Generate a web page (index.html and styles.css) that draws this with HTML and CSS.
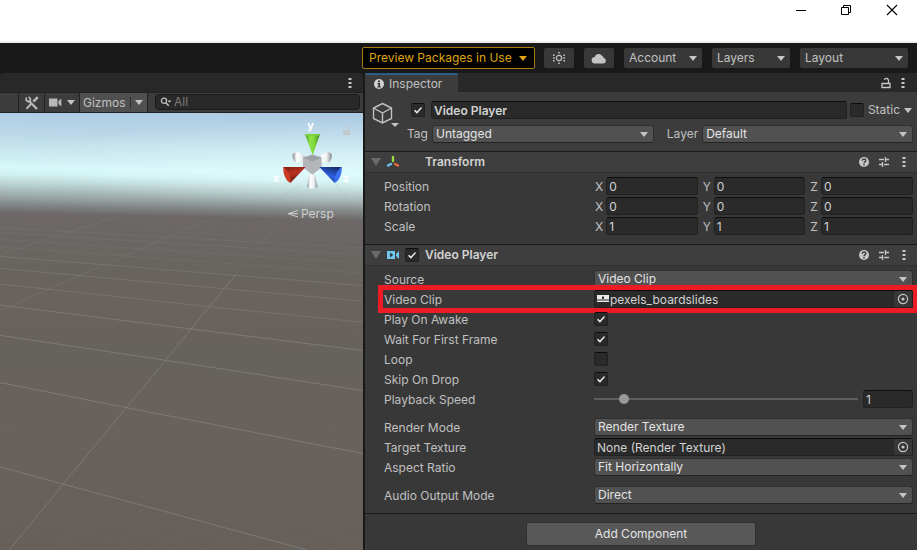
FILE: index.html
```html
<!DOCTYPE html>
<html lang="en">
<head>
<meta charset="utf-8">
<title>Unity Editor</title>
<link rel="stylesheet" href="styles.css">
</head>
<body>
<svg class="defs" aria-hidden="true">
  <symbol id="dots" viewBox="0 0 4 12"><path d="M.5 1h3v2h-3zM.5 5h3v2h-3zM.5 9h3v2h-3z" fill="#c8c8c8"/></symbol>
  <symbol id="help" viewBox="0 0 12 12"><circle cx="6" cy="6" r="5" fill="#c8c8c8"/><path d="M4.2 4.7c0-2.3 3.6-2.3 3.6-.1C7.8 5.9 6 5.7 6 7.2M6 8v1.4" fill="none" stroke="#3c3c3c" stroke-width="1.4"/></symbol>
  <symbol id="preset" viewBox="0 0 12 12"><path d="M1 3.5h5M8 3.5h3M7.5 1v5M1 8.5h3M6 8.5h5M4.5 6v5" fill="none" stroke="#c8c8c8" stroke-width="1.3"/></symbol>
  <symbol id="target" viewBox="0 0 12 12"><circle cx="6" cy="6" r="4.6" fill="none" stroke="#c4c4c4" stroke-width="1.2"/><circle cx="6" cy="6" r="1.6" fill="#c4c4c4"/></symbol>
</svg>

<header class="titlebar">
  <button aria-label="Minimize"><svg width="12" height="12"><path d="M2 6.5h10" stroke="#000"/></svg></button>
  <button aria-label="Restore"><svg width="12" height="12"><path d="M1.5 3.5h7v7h-7zM3.500 3.500v-2h7v7h-2" fill="none" stroke="#000"/></svg></button>
  <button aria-label="Close"><svg width="12" height="12"><path d="M1 1l10 10M11 1L1 11" stroke="#000" stroke-width="1.1"/></svg></button>
</header>

<nav class="toolbar">
  <button class="preview">Preview Packages in Use<i class="arrow"></i></button>
  <button class="tool" aria-label="Services"><svg width="14" height="14"><circle cx="7" cy="7" r="2.6" fill="none" stroke="#c4c4c4" stroke-width="1.2"/><path d="M6.200 1h1.600v1.600H6.200zM6.200 11.400h1.600V13H6.200zM1 3.500h1.600v1.600H1zM1 6.200h1.600v1.600H1zM1 9h1.600v1.600H1zM11.400 3.500H13v1.600h-1.600zM11.400 6.200H13v1.600h-1.600zM11.400 9H13v1.600h-1.600z" fill="#c4c4c4"/></svg></button>
  <button class="tool" aria-label="Cloud"><svg width="16" height="12"><path d="M4 11.500a3.200 3.200 0 0 1-.3-6.400A4 4 0 0 1 11 3.800a3.200 3.200 0 0 1 1.500 2 2.900 2.900 0 0 1 0 5.700z" fill="#c4c4c4"/></svg></button>
  <button class="tool menu">Account<i class="arrow"></i></button>
  <button class="tool menu">Layers<i class="arrow"></i></button>
  <button class="tool menu wide">Layout<i class="arrow"></i></button>
</nav>

<main class="workspace">
  <section class="panel scene-panel">
    <div class="tabs"><button class="icon scene-more" aria-label="Scene options"><svg width="4" height="12"><use href="#dots"/></svg></button></div>
    <div class="scene-bar">
      <span class="stub"></span>
      <button class="scene-tools" aria-label="Tools"><svg width="14" height="14" fill="none" stroke="#b8b8b8"><path d="M4 5l8 8" stroke-width="2.300"/><path d="M1.300 1.500v3l2 1.300 2-1V2.500L3.600.9" stroke-width="1.700"/><path d="M12.800 1.200L8.300 5.700" stroke-width="2.600"/><path d="M6 8l-4.500 4.700" stroke-width="2"/></svg></button>
      <button class="scene-camera" aria-label="Camera"><svg width="13" height="9"><path d="M0 .5h8.500v8H0zM9.500 3L12.300.5v8L9.500 6z" fill="#b8b8b8"/></svg><i class="arrow"></i></button>
      <button class="gizmos">Gizmos<i class="arrow"></i></button>
      <label class="search"><svg width="12" height="10"><circle cx="4" cy="3.700" r="2.600" fill="none" stroke="#c0c0c0" stroke-width="1.300"/><path d="M5.800 5.700l3 3" stroke="#c0c0c0" stroke-width="1.500"/><path d="M7.500 3.500h4l-2 2.200z" fill="#c0c0c0"/></svg><input type="text" placeholder="All" aria-label="Search scene"></label>
    </div>
    <div class="viewport">
      <svg class="world" viewBox="0 0 363 437" preserveAspectRatio="xMinYMin slice" aria-hidden="true">
        <defs>
          <linearGradient id="sky" x1="0" y1="-10" x2="0" y2="437" gradientUnits="userSpaceOnUse">
            <stop offset="0" stop-color="#a9c8e2"/><stop offset=".06" stop-color="#b9d5e8"/><stop offset=".118" stop-color="#cdecf2"/><stop offset=".143" stop-color="#d8f8f9"/><stop offset=".158" stop-color="#d2f2f2"/><stop offset=".182" stop-color="#b9d0d0"/><stop offset=".207" stop-color="#9ca9a9"/><stop offset=".228" stop-color="#7f8484"/><stop offset=".246" stop-color="#6d6867"/><stop offset=".36" stop-color="#68645f"/><stop offset=".44" stop-color="#6a625e"/><stop offset=".56" stop-color="#66625c"/><stop offset=".72" stop-color="#69615c"/><stop offset="1" stop-color="#67605a"/>
          </linearGradient>
          <radialGradient id="glow"><stop offset="0" stop-color="#e8ffff" stop-opacity=".5"/><stop offset="1" stop-color="#e8ffff" stop-opacity="0"/></radialGradient>
        </defs>
        <rect x="-5" y="-20" width="375" height="480" fill="url(#sky)" transform="skewY(1.2)"/>
        <ellipse cx="363" cy="50" rx="340" ry="45" fill="url(#glow)"/>
        <g transform="translate(0 87) scale(.3333)" fill="none" stroke="#8b8a88" stroke-width="3">
          <path opacity=".6" d="M0 801L430 917 920 1050M0 548L380 623 1090 761M0 406L497 481 1090 572M0 315L573 387 1090 452"/>
          <path opacity=".4" d="M0 252L628 320 1090 367M0 205L1090 304M0 169L1090 257"/>
          <path opacity=".2" d="M0 141L1090 220M0 118L1090 190M0 98L1090 165M0 83L1090 144"/>
          <path opacity=".08" d="M0 68L1090 126M0 56L1090 112M0 46L1090 98M0 38L1090 88"/>
          <path opacity=".55" d="M28 1050L190 852 380 622 497 481 573 387 705 227"/>
          <path opacity=".25" d="M705 227L840 65M0 331L240 226 620 60M0 165L350 50"/>
          <path opacity=".08" d="M0 680L1090 970M0 725L1090 1025M0 770L1000 1050M0 835L800 1050M0 880L620 1050M0 925L440 1050M0 970L270 1050M250 690L1090 900M1005 590L1013 1050M890 650L850 1050M765 700L690 1050M640 750L525 1050M500 780L360 1050M370 780L180 1050"/>
        </g>
      </svg>
      <svg class="gizmo" viewBox="0 9 294 351" role="img" aria-label="Scene orientation">
        <defs>
          <linearGradient id="gr"><stop offset="0" stop-color="#4a9c1c"/><stop offset=".35" stop-color="#8ee34a"/><stop offset=".65" stop-color="#7ad636"/><stop offset="1" stop-color="#3f7c1c"/></linearGradient>
          <linearGradient id="wh"><stop offset="0" stop-color="#8b8f91"/><stop offset=".3" stop-color="#fff"/><stop offset=".65" stop-color="#eceeef"/><stop offset="1" stop-color="#868a8c"/></linearGradient>
          <linearGradient id="rd" x1="0" y1="0" x2=".4" y2="1"><stop offset="0" stop-color="#7c1e12"/><stop offset=".5" stop-color="#b83220"/><stop offset="1" stop-color="#5d150d"/></linearGradient>
          <linearGradient id="bl" x1=".6" y1="0" x2=".2" y2="1"><stop offset="0" stop-color="#17306f"/><stop offset=".5" stop-color="#2d5fdf"/><stop offset="1" stop-color="#183990"/></linearGradient>
        </defs>
        <g fill="none" stroke="#8f9a9a" opacity=".25" stroke-width="2"><path d="M205 210L270 300M100 225L20 285"/></g>
        <path d="M83 132q9-10 21-4l22 15-12 12-23 3q-10-10-8-26z" fill="url(#wh)"/>
        <path d="M200 132q-9-10-21-4l-22 15 12 12 23 3q10-10 8-26z" fill="url(#wh)"/>
        <path d="M142 190l-9 5-7 36q16 10 32 0l-8-36z" fill="url(#wh)"/>
        <path d="M114 143l28-10 28 10v29l-28 22-28-22z" fill="#b3b7ba"/><path d="M114 143l28-8 28 8-28 12z" fill="#9da2a7"/>
        <path d="M120 72h45l-22 64z" fill="url(#gr)"/><path d="M120 72h45l-3 5h-39z" fill="#7bd33b"/>
        <path d="M55 171h67l-46 48z" fill="url(#rd)"/><path d="M55 171c10 5 23 26 22 47-13-1-24-27-22-47z" fill="#cb3c27"/>
        <path d="M230 171h-67l46 48z" fill="url(#bl)"/><path d="M230 171c-10 5-23 26-22 47 13-1 24-27 22-47z" fill="#3a70ed"/>
        <g class="axis"><text x="127" y="57">y</text><text x="24" y="215">x</text><text x="233" y="215">z</text></g>
        <path d="M234 61h21v14h-21z" fill="#c1c9cb"/><path d="M240 56q1-5 6-5t5 5v6" fill="none" stroke="#c1c9cb" stroke-width="3"/>
        <path d="M99 301l-29 10 29 10M70 311h29" fill="none" stroke="#d0d0d0" stroke-width="3"/>
        <text class="persp" x="108" y="325">Persp</text>
      </svg>
    </div>
  </section>

  <section class="panel inspector">
    <div class="tabs">
      <button class="tab"><svg width="12" height="12"><circle cx="6" cy="6" r="5" fill="#d2d2d2"/><path d="M5 2.500h2v1.700H5zM4.500 5h2.600v3.400h.8v1H4.300v-1h.9V6h-.7z" fill="#3c3c3c"/></svg>Inspector</button>
      <span class="tab-actions">
        <button class="icon" aria-label="Lock"><svg width="10" height="12"><path d="M1 6.500h8v4H1zM3 2.500q4-2.500 4.500 1v3" fill="none" stroke="#c8c8c8" stroke-width="1.300"/></svg></button>
        <button class="icon" aria-label="Inspector options"><svg width="4" height="12"><use href="#dots"/></svg></button>
      </span>
    </div>

    <div class="object">
      <button class="icon cube" aria-label="Object icon"><svg width="28" height="26"><path d="M10.500 1.500l9 4.500v10.500l-9 4.500-9-4.500V6zM1.500 6l9 5 9-5M10.500 11v10" fill="none" stroke="#c0c0c0" stroke-width="1.400"/><path d="M19 21h8l-4 4z" fill="#c4c4c4"/></svg></button>
      <div class="object-fields">
        <div class="line name-line">
          <input type="checkbox" checked aria-label="Active">
          <input class="field name" type="text" value="Video Player" aria-label="Name">
          <label class="static"><input type="checkbox">Static<i class="arrow"></i></label>
        </div>
        <div class="line tag-line">
          <label for="tag">Tag</label><span class="select tag"><select id="tag"><option>Untagged</option></select></span>
          <label for="layer">Layer</label><span class="select layer"><select id="layer"><option>Default</option></select></span>
        </div>
      </div>
    </div>

    <section class="component">
      <header class="component-head">
        <i class="fold"></i>
        <svg class="kind" width="14" height="14" fill="none" stroke-width="2.400" stroke-linecap="round"><path d="M7 2v4" stroke="#9bd83d"/><path d="M5 9L2 10.500" stroke="#6bc4f0"/><path d="M9 9l3 1.500" stroke="#f26b3c"/></svg>
        <h2>Transform</h2>
        <span class="head-actions"><button class="icon" aria-label="Help"><svg width="12" height="12"><use href="#help"/></svg></button><button class="icon" aria-label="Presets"><svg width="12" height="12"><use href="#preset"/></svg></button><button class="icon" aria-label="More"><svg width="4" height="12"><use href="#dots"/></svg></button></span>
      </header>
      <div class="rows">
        <div class="row"><span class="label">Position</span><div class="vector"><label>X<input class="field" value="0"></label><label>Y<input class="field" value="0"></label><label>Z<input class="field" value="0"></label></div></div>
        <div class="row"><span class="label">Rotation</span><div class="vector"><label>X<input class="field" value="0"></label><label>Y<input class="field" value="0"></label><label>Z<input class="field" value="0"></label></div></div>
        <div class="row"><span class="label">Scale</span><div class="vector"><label>X<input class="field" value="1"></label><label>Y<input class="field" value="1"></label><label>Z<input class="field" value="1"></label></div></div>
      </div>
    </section>

    <section class="component video">
      <header class="component-head">
        <i class="fold"></i>
        <svg class="kind" width="14" height="14"><path d="M1 3h8v8H1zM10 6l3-3v8l-3-3z" fill="#70c8f0"/><path d="M4 4.500L7.200 7 4 9.500z" fill="#303c42"/></svg>
        <input type="checkbox" checked aria-label="Video Player enabled">
        <h2>Video Player</h2>
        <span class="head-actions"><button class="icon" aria-label="Help"><svg width="12" height="12"><use href="#help"/></svg></button><button class="icon" aria-label="Presets"><svg width="12" height="12"><use href="#preset"/></svg></button><button class="icon" aria-label="More"><svg width="4" height="12"><use href="#dots"/></svg></button></span>
      </header>
      <div class="rows">
        <div class="row"><label class="label" for="source">Source</label><span class="select"><select id="source"><option>Video Clip</option></select></span></div>
        <div class="row marked"><label class="label" for="clip">Video Clip</label><div class="field object-field"><svg width="13" height="8"><path d="M0 0h12v4.500H0zM0 5.500h12V7H0z" fill="#e8e8e8"/><path d="M5 1.500h2V4H5z" fill="#333"/></svg><input id="clip" value="pexels_boardslides" readonly><button aria-label="Choose clip"><svg width="12" height="12"><use href="#target"/></svg></button></div></div>
        <div class="row"><label class="label" for="awake">Play On Awake</label><input id="awake" type="checkbox" checked></div>
        <div class="row"><label class="label" for="wait">Wait For First Frame</label><input id="wait" type="checkbox" checked></div>
        <div class="row"><label class="label" for="loop">Loop</label><input id="loop" type="checkbox"></div>
        <div class="row"><label class="label" for="skip">Skip On Drop</label><input id="skip" type="checkbox" checked></div>
        <div class="row"><label class="label" for="speed">Playback Speed</label><div class="slider"><input id="speed" type="range" min="0" max="10" step="0.1" value="1"><input class="field" value="1" aria-label="Playback speed value"></div></div>
        <div class="row spaced"><label class="label" for="render">Render Mode</label><span class="select"><select id="render"><option>Render Texture</option></select></span></div>
        <div class="row"><label class="label" for="texture">Target Texture</label><div class="field object-field"><input id="texture" value="None (Render Texture)" readonly><button aria-label="Choose texture"><svg width="12" height="12"><use href="#target"/></svg></button></div></div>
        <div class="row"><label class="label" for="aspect">Aspect Ratio</label><span class="select"><select id="aspect"><option>Fit Horizontally</option></select></span></div>
        <div class="row spaced"><label class="label" for="audio">Audio Output Mode</label><span class="select"><select id="audio"><option>Direct</option></select></span></div>
      </div>
    </section>

    <footer class="add"><button>Add Component</button></footer>
  </section>
</main>
</body>
</html>
```

FILE: styles.css
```css
* { box-sizing: border-box; }

body {
  margin: 0;
  min-height: 100vh;
  display: flex;
  flex-direction: column;
  overflow: hidden;
  background: #191919;
  color: #c0c0c0;
  font: 12px/20px Inter, "Liberation Sans", sans-serif;
}

button, input, select { font: inherit; color: inherit; margin: 0; padding: 0; border: 0; background: none; border-radius: 0; outline: 0; }
svg { display: block; flex: none; }
.defs { position: absolute; width: 0; height: 0; }

.arrow { width: 0; height: 0; border: 4px solid transparent; border-top: 5px solid #c4c4c4; border-bottom: 0; flex: none; }
.icon { display: flex; }

.titlebar { display: flex; justify-content: flex-end; height: 43px; padding-right: 2px; background: #fff; border-bottom: 2px solid #ebefed; }
.titlebar button { width: 46px; height: 20px; display: flex; align-items: center; justify-content: center; }

.toolbar { display: flex; justify-content: flex-end; align-items: center; gap: 10px; height: 30px; padding-right: 9px; }
.toolbar button { display: flex; align-items: center; justify-content: center; flex: none; border-radius: 2px; }
.toolbar .preview { width: 173px; height: 22px; margin-right: -1px; padding: 0 7px 0 6px; justify-content: space-between; border: 1px solid #a87c11; background: #000; color: #dfa411; white-space: nowrap; }
.preview .arrow { border-top-color: #dfa411; }
.tool { width: 30px; height: 20px; background: #383838; }
.toolbar .menu { width: 78px; justify-content: space-between; padding: 0 5px; }
.toolbar .wide { width: 108px; }

.workspace { flex: 1; display: grid; grid-template-columns: 363fr 552fr; gap: 2px; }
.panel { display: flex; flex-direction: column; min-width: 0; }
.tabs { display: flex; justify-content: space-between; align-items: center; height: 19px; background: #282828; border-radius: 3px 3px 0 0; }
.scene-more { margin: 0 11px 0 auto; }

.scene-bar { display: flex; height: 21px; background: #3c3c3c; border-top: 1px solid #222; border-bottom: 1px solid #222; }
.scene-bar > button, .stub { display: flex; flex: none; align-items: center; justify-content: center; border-right: 1px solid #222; }
.stub { width: 19px; }
.scene-tools { width: 26px; }
.scene-camera { width: 35px; gap: 5px; }
.scene-bar .gizmos { width: 68px; justify-content: space-between; padding: 0 4px 0 3px; background: linear-gradient(#303030, #303030) 50px 4px / 1px 12px no-repeat #505050; }
.search { flex: 1; min-width: 0; display: flex; align-items: center; gap: 2px; height: 16px; margin: 1px 3px 0 7px; padding-left: 4px; background: #292929; border: 1px solid #1a1a1a; border-radius: 4px; }
.search input { flex: 1; min-width: 0; height: 14px; }
.search input::placeholder { color: #7b7b7b; opacity: 1; }

.viewport { flex: 1; position: relative; overflow: hidden; background: #67605a; }
.world { position: absolute; inset: 0; width: 100%; height: 100%; }
.gizmo { position: absolute; top: 0; right: 0; width: 98px; height: 117px; }
.axis { fill: #fff; font-size: 33px; font-weight: 700; }
.persp { fill: #d0d0d0; font-size: 36px; }

.inspector { background: #383838; }
.tab { display: flex; align-items: center; gap: 4px; width: 93px; height: 19px; padding-left: 8px; background: #3c3c3c; border-top: 2px solid #2c5d87; border-radius: 2px 2px 0 0; }
.tab-actions { display: flex; gap: 10px; padding-right: 12px; }

.object { display: flex; height: 59px; padding: 9px 4px 0 7px; background: #3c3c3c; }
.cube { padding-top: 1px; width: 35px; }
.object-fields { flex: 1; min-width: 0; display: flex; flex-direction: column; gap: 6px; }
.line { display: flex; align-items: center; height: 18px; }
.name-line { padding-left: 4px; gap: 6px; }
.tag-line { gap: 4px; }
.tag { flex: 220; margin-right: 9px; }
.layer { flex: 209; }
.name-line .name { flex: 1; min-width: 0; padding: 0 2px; font-weight: 600; }
.static { display: flex; align-items: center; gap: 4px; margin-left: -3px; padding-right: 1px; }

.field { width: 100%; height: 18px; padding: 0 2px; background: #2a2a2a; border: 1px solid #212121; border-top-color: #0d0d0d; border-radius: 3px; color: #d2d2d2; font-size: 12px; line-height: 16px; }

input[type="checkbox"] { appearance: none; flex: none; width: 14px; height: 14px; background: #2a2a2a; border: 1px solid #212121; border-top-color: #0d0d0d; border-radius: 2px; }
input[type="checkbox"]:checked::before { content: ""; display: block; width: 8px; height: 7px; margin: 3px 2px; background: #eee; clip-path: polygon(0 54%, 14% 38%, 36% 66%, 88% 0, 100% 14%, 37% 98%); }

.select { position: relative; display: block; min-width: 0; height: 18px; background: #515151; border: 1px solid #303030; border-bottom-color: #242424; border-radius: 3px; color: #e4e4e4; }
.select::after { content: ""; position: absolute; right: 5px; top: 6px; border: 4px solid transparent; border-top: 5px solid #c4c4c4; border-bottom: 0; pointer-events: none; }
.select select { display: block; appearance: none; width: 100%; height: 16px; padding-left: 3px; line-height: 16px; }

.component { border-top: 1px solid #1a1a1a; }
.component-head { display: flex; align-items: center; height: 21px; padding: 0 8px 0 6px; background: #3e3e3e; border-bottom: 1px solid #303030; }
.fold { border: 5px solid transparent; border-top: 8px solid #6a6a6a; border-bottom: 0; }
.kind { margin: 0 6px 0 5px; }
.component-head h2 { margin: 0; font-size: 12px; font-weight: 600; color: #d2d2d2; }
.kind + h2 { margin-left: 19px; }
.component-head input { margin-left: -1px; }
.component-head input + h2 { margin-left: 6px; }
.head-actions { display: flex; margin-left: auto; gap: 8px; padding-right: 3px; }
.head-actions .icon:last-child { margin-left: 4px; }

.rows { padding: 4px 4px 7px 19px; }
.row { display: grid; grid-template-columns: 210fr 319fr; height: 20px; position: relative; }
.row > input[type="checkbox"] { margin-top: 2px; }
.spaced { margin-top: 8px; }
.label { white-space: nowrap; }
.vector { display: grid; grid-template-columns: repeat(3, 1fr); gap: 5px; padding-left: 1px; }
.vector label { display: flex; gap: 3px; }
.vector .field { flex: 1; width: 0; min-width: 0; }

.object-field { display: flex; align-items: center; padding: 0 0 0 2px; }
.object-field input { flex: 1; min-width: 0; height: 16px; padding-top: 1px; }
.object-field button { display: flex; align-items: center; justify-content: center; width: 18px; height: 16px; background: #373737; }
.marked::after { content: ""; position: absolute; inset: -5px -5px -3px -6px; border: 5px solid #ed1c24; pointer-events: none; }

.slider { display: flex; gap: 5px; }
.slider .field { width: 50px; }
input[type="range"] { appearance: none; flex: 1; min-width: 0; height: 18px; }
input[type="range"]::-webkit-slider-runnable-track { height: 2px; background: #5e5e5e; }
input[type="range"]::-webkit-slider-thumb { appearance: none; width: 10px; height: 10px; margin-top: -4px; border-radius: 50%; background: #999; }

.add { flex: 1; display: flex; justify-content: center; align-items: flex-start; padding-top: 8px; border-top: 1px solid #1a1a1a; }
.add button { width: 230px; height: 24px; background: #585858; border: 1px solid #303030; border-radius: 3px; color: #e4e4e4; }
```
